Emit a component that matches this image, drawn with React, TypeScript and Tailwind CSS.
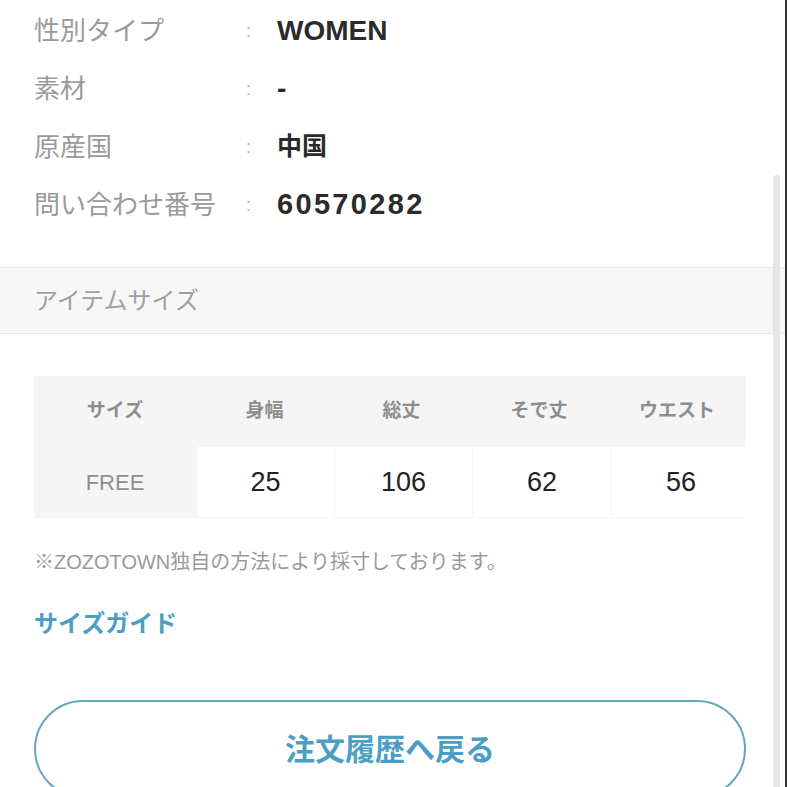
const jp = { fontFamily: '"Liberation Sans", "Noto Sans CJK JP", sans-serif' };

const specs = [
  { label: '性別タイプ', value: 'WOMEN', cls: 'text-[28px]' },
  { label: '素材', value: '-', cls: 'text-[28px]' },
  { label: '原産国', value: '中国', cls: 'text-[25px]' },
  { label: '問い合わせ番号', value: '60570282', cls: 'text-[29px] tracking-[0.08em]' },
];

const heads = ['サイズ', '身幅', '総丈', 'そで丈', 'ウエスト'];
const sizes = ['25', '106', '62', '56'];

export default function App() {
  return (
    <div className="relative flex h-[787px] w-[787px] overflow-hidden bg-white" style={jp}>
      <div className="flex w-[785px] flex-col self-start">
        {/* Spec list */}
        <ul className="flex flex-col pt-[2px]">
          {specs.map(s => (
            <li key={s.label} className="flex h-[58px] items-center">
              <span className="w-[246px] shrink-0 pl-[34px] text-[26px] text-[#9a9a9a]">{s.label}</span>
              <span className="w-[31px] shrink-0 text-[18px] text-[#b4b4b4]">:</span>
              <span className={`${s.cls} font-semibold text-[#2b2b2b]`}>{s.value}</span>
            </li>
          ))}
        </ul>

        {/* Section header */}
        <div className="mt-[33px] flex h-[67px] items-center border-y border-[#e8e8e8] bg-[#f7f7f7] pl-[34px]">
          <h2 className="text-[24px] text-[#a0a0a0]">アイテムサイズ</h2>
        </div>

        {/* Size table */}
        <div className="mx-[34px] mt-[42px] w-[712px] bg-[#f5f5f5]">
          <div className="grid h-[71px] grid-cols-[162px_137px_137px_138px_138px] items-center">
            {heads.map(h => (
              <span key={h} className="text-center text-[19px] font-semibold text-[#8e8e8e]">{h}</span>
            ))}
          </div>
          <div className="grid h-[71px] grid-cols-[162px_137px_137px_138px_138px] gap-x-px pb-px">
            <span className="flex items-center justify-center text-[22px] text-[#8e8e8e]">FREE</span>
            {sizes.map((v, i) => (
              <span key={i} className="flex items-center justify-center bg-white text-[27px] text-[#222]">{v}</span>
            ))}
          </div>
        </div>

        <p className="mt-[30px] pl-[34px] text-[20px] leading-[28px] text-[#9a9a9a]">
          ※ZOZOTOWN独自の方法により採寸しております。
        </p>

        <a className="mt-[32px] pl-[34px] text-[24px] font-bold leading-[32px] text-[#4b9fc5]">サイズガイド</a>

        <button
          type="button"
          className="mx-[34px] mt-[60px] h-[98px] w-[712px] rounded-full border-2 border-[#65a7bf] text-[30px] font-bold text-[#4b9fc5]"
        >
          注文履歴へ戻る
        </button>
      </div>

      {/* scrollbar thumb */}
      <div className="absolute right-[7px] top-[175px] h-[640px] w-[7px] rounded-t-sm bg-[#e6e6e6]" />
      <div className="ml-auto w-[2px] self-stretch bg-[#333]" />
    </div>
  );
}
